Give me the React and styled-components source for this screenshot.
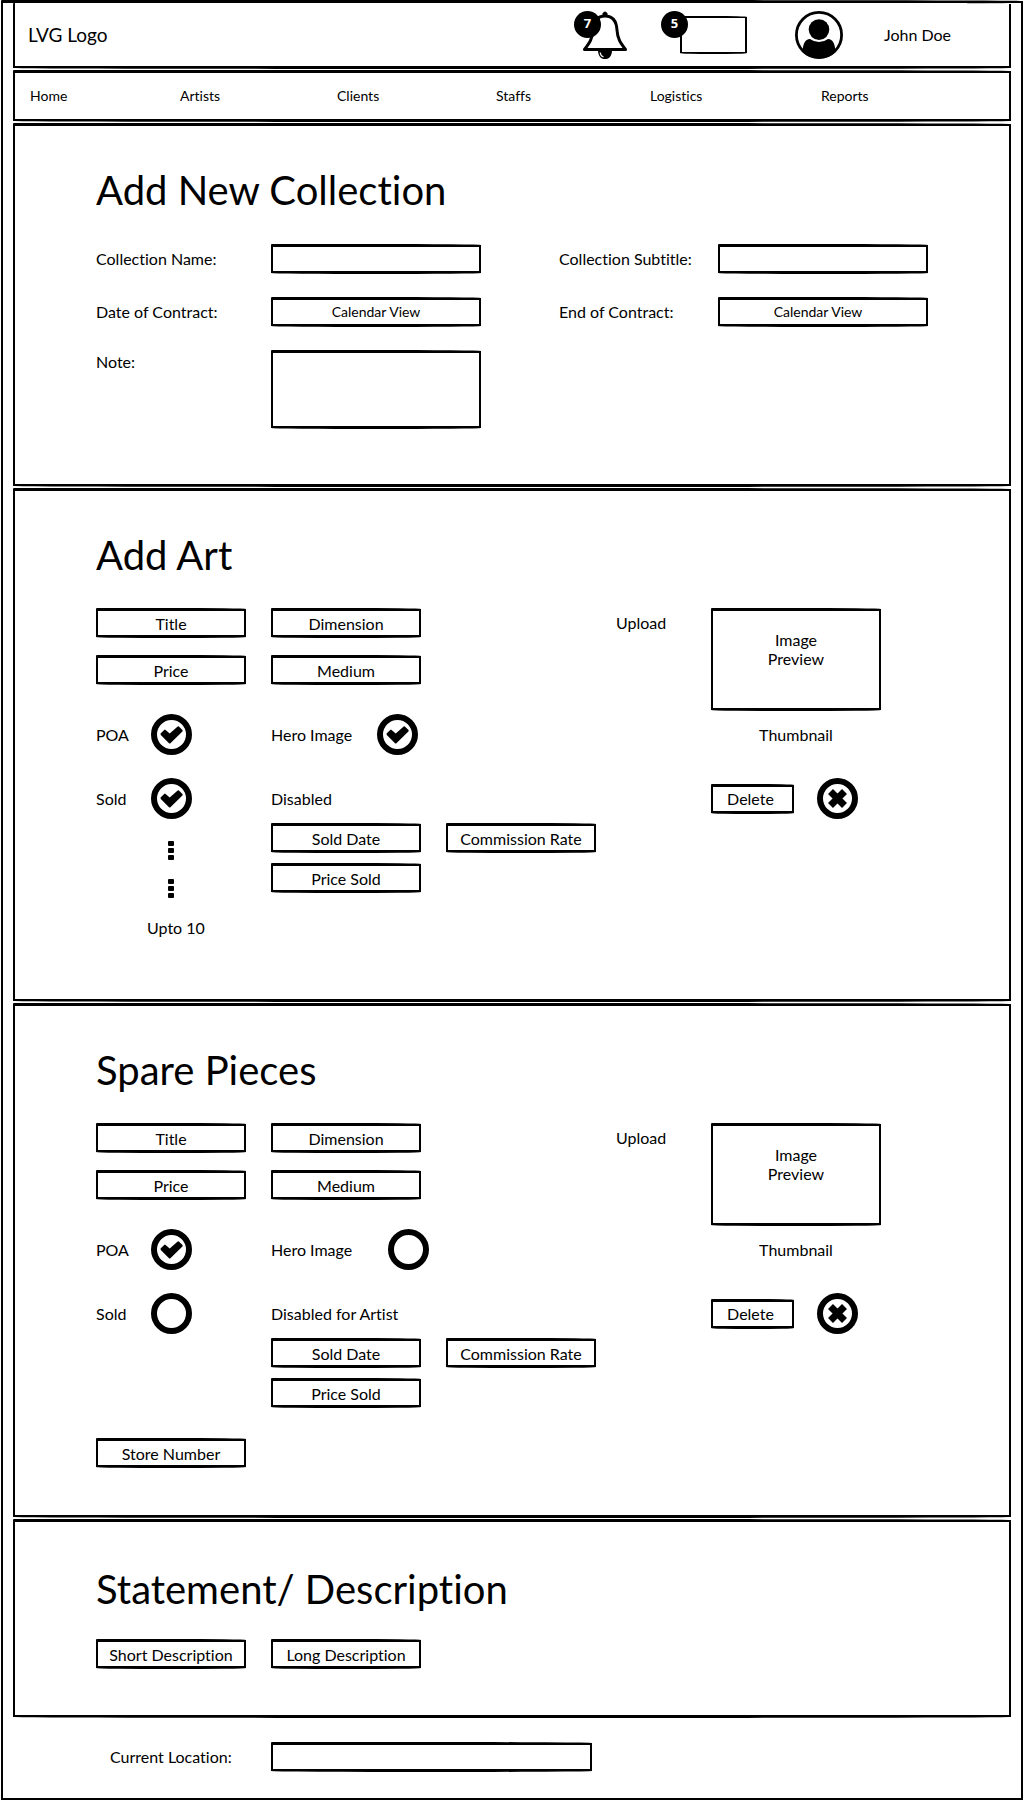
import React, { useId, useState } from "react";
import styled, { createGlobalStyle, css } from "styled-components";

const GlobalStyle = createGlobalStyle`
  *, *::before, *::after { box-sizing: border-box; }
  body {
    margin: 0;
    background: #fff;
    color: #000;
    font-family: Lato, "Liberation Sans", Arial, sans-serif;
    font-size: 16px;
    line-height: 20px;
    font-variant-ligatures: none;
  }
  button, input, textarea { font: inherit; color: inherit; font-variant-ligatures: none; }
`;

/* Slightly uneven corners give the boxes a pen-drawn outline. */
const sketched = css`
  border: solid #000;
  border-width: 3px 2px;
  border-radius: 1px 50% 50% 50% / 1px 1px 1px 1px;
`;

const Page = styled.div`
  padding: 0 1px;
`;

const Frame = styled.div`
  ${sketched}
  padding: 0 10px;
`;

const TopBar = styled.header`
  ${sketched}
  border-top: 0;
  display: flex;
  align-items: center;
  justify-content: space-between;
  height: 66px;
  padding: 0 58px 0 13px;
`;

const Logo = styled.a`
  color: inherit;
  font-size: 19px;
  text-decoration: none;
`;

const Account = styled.div`
  display: flex;
  align-items: center;
`;

const IconButton = styled.button`
  position: relative;
  display: flex;
  padding: 0;
  border: 0;
  background: none;
  cursor: pointer;
`;

const BellButton = styled(IconButton)`
  padding-left: 9px;
  margin-right: 34px;
`;

const InboxButton = styled(IconButton)`
  padding: 5px 0 5px 19px;
  margin-right: 48px;
`;

const Inbox = styled.span`
  ${sketched}
  border-width: 2px;
  width: 67px;
  height: 38px;
`;

const Badge = styled.span`
  position: absolute;
  top: 0;
  left: 0;
  width: 27px;
  height: 27px;
  border-radius: 50%;
  background: #000;
  color: #fff;
  font-family: "Noto Sans", sans-serif;
  font-size: 13px;
  font-weight: 700;
  line-height: 25px;
  text-align: center;
`;

const UserName = styled.span`
  margin-left: 41px;
`;

const Nav = styled.nav`
  ${sketched}
  display: grid;
  grid-template-columns: 150fr 157fr 159fr 154fr 171fr 188fr;
  align-items: center;
  height: 52px;
  margin-top: 1px;
  padding-left: 15px;
`;

const NavLink = styled.a`
  justify-self: start;
  color: inherit;
  font-size: 14px;
  text-decoration: none;
`;

const Panel = styled.section`
  ${sketched}
  margin-top: 1px;
  padding: 40px 81px ${(p) => p.$bottom}px;
`;

const Heading = styled.h2`
  margin: 0;
  padding: ${(p) => (p.$low ? "3px 0 26px" : "0 0 29px")};
  font-size: 40px;
  font-weight: 400;
  line-height: 48px;
`;

const ContractForm = styled.form`
  display: grid;
  grid-template-columns: 175fr 288fr 159fr 210fr;
  row-gap: 23px;
  align-items: center;
  padding-top: 1px;
`;

const FieldLabel = styled.label`
  align-self: ${(p) => (p.$top ? "start" : "center")};
  line-height: 24px;
  padding-left: ${(p) => (p.$indent ? "14px" : "0")};
`;

const Field = styled.input`
  ${sketched}
  display: block;
  width: ${(p) => p.$width || 150}px;
  max-width: 100%;
  height: 30px;
  padding: 0;
  background: #fff;
  text-align: center;
  &::placeholder { color: #000; opacity: 1; }
`;

const NoteField = styled.textarea`
  ${sketched}
  display: block;
  width: 210px;
  height: 79px;
  padding: 4px 8px;
  background: #fff;
  resize: none;
`;

const BoxButton = styled.button`
  ${sketched}
  width: ${(p) => p.$width}px;
  height: 30px;
  padding: 0 ${(p) => p.$inset || 0}px 0 0;
  background: #fff;
  font-size: ${(p) => (p.$small ? 14 : 16)}px;
  line-height: 20px;
  cursor: pointer;
`;

const ArtForm = styled.form`
  display: grid;
  grid-template-columns: 175fr 345fr 95fr 217fr;
  align-items: start;
`;

const Column = styled.div`
  display: flex;
  flex-direction: column;
  align-items: flex-start;
`;

const FieldStack = styled.div`
  display: flex;
  flex-direction: column;
  gap: 17px;
`;

const ToggleStack = styled.div`
  display: flex;
  flex-direction: column;
  gap: 23px;
  margin-top: 29px;
`;

const ToggleRow = styled.div`
  display: flex;
  align-items: center;
  height: 41px;
`;

const ToggleLabel = styled.label`
  min-width: ${(p) => p.$width}px;
`;

const Toggle = styled.span`
  display: grid;
  place-items: center;
  > * { grid-area: 1 / 1; }
  svg { pointer-events: none; }
`;

const RoundCheckbox = styled.input`
  appearance: none;
  width: 41px;
  height: 41px;
  margin: 0;
  border: 6px solid #000;
  border-radius: 50%;
  cursor: pointer;
`;

const SaleFields = styled.div`
  display: grid;
  grid-template-columns: 150px 150px;
  gap: 10px 25px;
  margin-top: 4px;
`;

const More = styled.div`
  display: flex;
  flex-direction: column;
  align-items: flex-start;
  gap: 19px;
  margin: 22px 0 0 51px;
  svg { margin-left: 21px; }
`;

const MoreText = styled.span`
  line-height: 22px;
`;

const UploadButton = styled.button`
  justify-self: start;
  height: 30px;
  padding: 0;
  border: 0;
  background: none;
  cursor: pointer;
`;

const Figure = styled.figure`
  margin: 0;
  width: 170px;
  text-align: center;
`;

const Preview = styled.div`
  ${sketched}
  height: 103px;
  padding: 19px 50px;
  line-height: 19px;
`;

const Caption = styled.figcaption`
  margin-top: 3px;
  line-height: 41px;
`;

const DeleteRow = styled.div`
  display: flex;
  align-items: center;
  gap: 23px;
  margin-top: 23px;
`;

const StoreRow = styled.div`
  margin-top: 104px;
`;

const DescriptionRow = styled.div`
  display: flex;
  gap: 25px;
`;

const Footer = styled.form`
  display: grid;
  grid-template-columns: 175fr 657fr;
  align-items: center;
  padding: 24px 83px 26px;
`;

function Bell() {
  return (
    <svg width="44" height="48" viewBox="0 0 44 48" fill="none" aria-hidden="true">
      <path d="M19.5 5V2.5Q22 -1.5 24.5 2.5V5Z" fill="#000" />
      <path
        d="M22 5C13.500 5 10.500 11 10 19C9.500 28 6.500 32 1.500 38.500H42.500C37.500 32 34.500 28 34 19C33.500 11 30.500 5 22 5Z"
        stroke="#000"
        strokeWidth="3"
        strokeLinejoin="round"
      />
      <path d="M15 39.500H29C29 51 15 51 15 39.500Z" fill="#000" />
      <path d="M17.200 41.500Q17.500 45 20.500 46" stroke="#fff" strokeWidth="1.200" />
    </svg>
  );
}

function Avatar() {
  return (
    <svg width="48" height="48" viewBox="0 0 48 48" role="img" aria-label="User">
      <circle cx="24" cy="24" r="22.600" fill="#fff" stroke="#000" strokeWidth="2.800" />
      <circle cx="24" cy="18.600" r="10.300" fill="#000" />
      <path d="M7.500 41C8 33 10 28 15 28Q19 31 24 31T33 28C38 28 40 33 40.500 41Q33.500 47.500 24 47.500T7.500 41Z" fill="#000" />
    </svg>
  );
}

function CheckMark() {
  return (
    <svg width="41" height="41" viewBox="0 0 41 41" aria-hidden="true">
      <path
        d="M9.800 19.200L13.200 15.900Q13.900 15.300 14.600 15.900L18.700 19.600L26.700 12.600Q27.400 12.100 28.100 12.700L31.500 16.100Q32 16.800 31.400 17.400L19.400 29.300Q18.700 29.900 18 29.300L9.800 20.900Q9.200 20 9.800 19.200Z"
        fill="#000"
      />
    </svg>
  );
}

function CrossMark() {
  return (
    <svg width="41" height="41" viewBox="0 0 41 41" fill="none" stroke="#000" aria-hidden="true">
      <circle cx="20.500" cy="20.500" r="17.500" strokeWidth="6" />
      <path d="M13.500 13.500L27.500 27.500M27.500 13.500L13.500 27.500" strokeWidth="7" />
    </svg>
  );
}

function Dots() {
  return (
    <svg width="6" height="19" viewBox="0 0 6 19" aria-hidden="true">
      <rect width="6" height="5" rx="1" />
      <rect y="7" width="6" height="5" rx="1" />
      <rect y="14" width="6" height="5" rx="1" />
    </svg>
  );
}

function CheckToggle({ label, labelWidth, initial }) {
  const id = useId();
  const [on, setOn] = useState(initial);
  return (
    <ToggleRow>
      <ToggleLabel htmlFor={id} $width={labelWidth}>{label}</ToggleLabel>
      <Toggle>
        <RoundCheckbox id={id} type="checkbox" checked={on} onChange={() => setOn(!on)} />
        {on && <CheckMark />}
      </Toggle>
    </ToggleRow>
  );
}

function TextField({ name, width }) {
  return <Field type="text" placeholder={name} aria-label={name} $width={width} />;
}

function ArtEditor({ sold, hero, heroLabelWidth, saleNote, extra }) {
  return (
    <ArtForm>
      <Column>
        <FieldStack>
          <TextField name="Title" />
          <TextField name="Price" />
        </FieldStack>
        <ToggleStack>
          <CheckToggle label="POA" labelWidth={55} initial />
          <CheckToggle label="Sold" labelWidth={55} initial={sold} />
        </ToggleStack>
        {extra}
      </Column>
      <Column>
        <FieldStack>
          <TextField name="Dimension" />
          <TextField name="Medium" />
        </FieldStack>
        <ToggleStack>
          <CheckToggle label="Hero Image" labelWidth={heroLabelWidth} initial={hero} />
          <ToggleRow>{saleNote}</ToggleRow>
        </ToggleStack>
        <SaleFields>
          <TextField name="Sold Date" />
          <TextField name="Commission Rate" />
          <TextField name="Price Sold" />
        </SaleFields>
      </Column>
      <UploadButton type="button">Upload</UploadButton>
      <Column>
        <Figure>
          <Preview>Image Preview</Preview>
          <Caption>Thumbnail</Caption>
        </Figure>
        <DeleteRow>
          <BoxButton type="button" $width={83} $inset={4}>Delete</BoxButton>
          <IconButton type="button" aria-label="Remove"><CrossMark /></IconButton>
        </DeleteRow>
      </Column>
    </ArtForm>
  );
}

const links = ["Home", "Artists", "Clients", "Staffs", "Logistics", "Reports"];

export default function App() {
  return (
    <Page>
      <GlobalStyle />
      <Frame>
        <TopBar>
          <Logo href="#">LVG Logo</Logo>
          <Account>
            <BellButton type="button" aria-label="Notifications">
              <Bell />
              <Badge>7</Badge>
            </BellButton>
            <InboxButton type="button" aria-label="Messages">
              <Inbox />
              <Badge>5</Badge>
            </InboxButton>
            <Avatar />
            <UserName>John Doe</UserName>
          </Account>
        </TopBar>

        <Nav>
          {links.map((name) => (
            <NavLink key={name} href={`#${name.toLowerCase()}`}>{name}</NavLink>
          ))}
        </Nav>

        <main>
          <Panel $bottom={55}>
            <Heading>Add New Collection</Heading>
            <ContractForm>
              <FieldLabel htmlFor="name">Collection Name:</FieldLabel>
              <Field id="name" type="text" $width={210} />
              <FieldLabel htmlFor="subtitle">Collection Subtitle:</FieldLabel>
              <Field id="subtitle" type="text" $width={210} />
              <FieldLabel htmlFor="start">Date of Contract:</FieldLabel>
              <BoxButton id="start" type="button" $width={210} $small>Calendar View</BoxButton>
              <FieldLabel htmlFor="end">End of Contract:</FieldLabel>
              <BoxButton id="end" type="button" $width={210} $inset={10} $small>Calendar View</BoxButton>
              <FieldLabel htmlFor="note" $top>Note:</FieldLabel>
              <NoteField id="note" />
            </ContractForm>
          </Panel>

          <Panel $bottom={60}>
            <Heading>Add Art</Heading>
            <ArtEditor
              sold
              hero
              heroLabelWidth={106}
              saleNote="Disabled"
              extra={
                <More>
                  <Dots />
                  <Dots />
                  <MoreText>Upto 10</MoreText>
                </More>
              }
            />
          </Panel>

          <Panel $bottom={47}>
            <Heading>Spare Pieces</Heading>
            <ArtEditor
              sold={false}
              hero={false}
              heroLabelWidth={117}
              saleNote="Disabled for Artist"
              extra={
                <StoreRow>
                  <TextField name="Store Number" />
                </StoreRow>
              }
            />
          </Panel>

          <Panel $bottom={46}>
            <Heading $low>Statement/ Description</Heading>
            <DescriptionRow>
              <TextField name="Short Description" />
              <TextField name="Long Description" />
            </DescriptionRow>
          </Panel>
        </main>

        <Footer>
          <FieldLabel htmlFor="location" $indent>Current Location:</FieldLabel>
          <Field id="location" type="text" $width={321} />
        </Footer>
      </Frame>
    </Page>
  );
}
